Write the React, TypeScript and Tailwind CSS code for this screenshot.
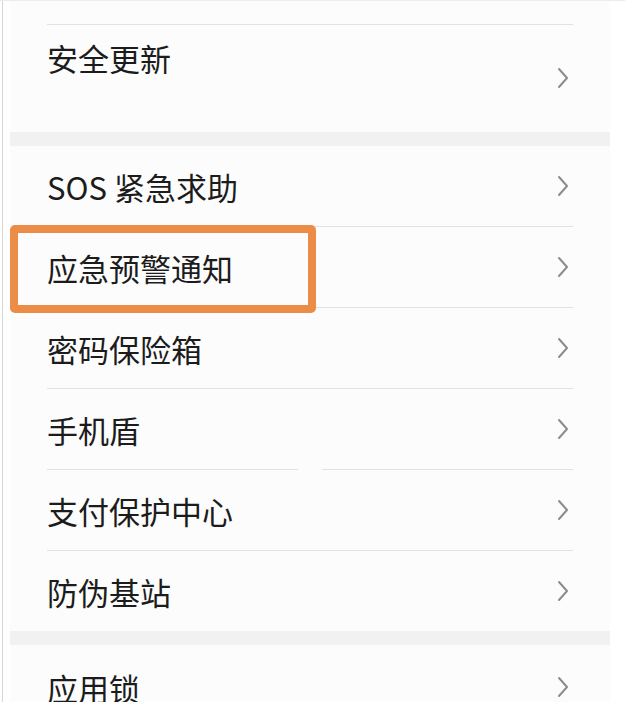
const cjk = { fontFamily: '"Noto Sans CJK SC", "Noto Sans", sans-serif' };

function Chevron() {
  return (
    <svg width="12" height="22" viewBox="0 0 12 22" className="shrink-0">
      <polyline
        points="2,2 10,11 2,20"
        fill="none"
        stroke="#8c8c8c"
        strokeWidth="2"
        strokeLinecap="round"
        strokeLinejoin="round"
      />
    </svg>
  );
}

function Row({
  label,
  divider = true,
  split = false,
  highlight = false,
}: {
  label: string;
  divider?: boolean;
  split?: boolean;
  highlight?: boolean;
}) {
  return (
    <div className="relative px-[37px]">
      <div className="flex h-[80px] items-center justify-between">
        <span className="text-[31px] leading-none text-[#1c1c1c]">{label}</span>
        <div className="mr-[4px]">
          <Chevron />
        </div>
      </div>
      {divider &&
        (split ? (
          <div className="flex h-px gap-[24px]">
            <div className="w-[251px] bg-[#e2e2e2]" />
            <div className="flex-1 bg-[#e2e2e2]" />
          </div>
        ) : (
          <div className="h-px bg-[#e2e2e2]" />
        ))}
      {highlight && (
        <div className="absolute left-0 top-[-2px] h-[88px] w-[306px] rounded-[5px] border-[8px] border-[#ec8d47]" />
      )}
    </div>
  );
}

export default function App() {
  return (
    <div
      className="h-[702px] overflow-hidden border-t border-[#ececec] bg-white"
      style={cjk}
    >
      <div className="flex h-full">
        <div className="ml-[2px] w-px bg-[#d6d6d6]" />
        <div className="ml-[7px] w-[600px] bg-[#fcfcfc]">
          <div className="h-[23px]" />
          <div className="px-[37px]">
            <div className="h-px bg-[#e2e2e2]" />
            <div className="flex h-[107px] justify-between">
              <span className="pt-[17px] text-[31px] leading-none text-[#1c1c1c]">安全更新</span>
              <div className="mr-[4px] pt-[42px]">
                <Chevron />
              </div>
            </div>
          </div>
          <div className="h-[14px] bg-[#f1f1f1]" />
          <Row label="SOS 紧急求助" />
          <Row label="应急预警通知" highlight />
          <Row label="密码保险箱" />
          <Row label="手机盾" split />
          <Row label="支付保护中心" />
          <Row label="防伪基站" divider={false} />
          <div className="h-[14px] bg-[#f1f1f1]" />
          <div className="px-[37px]">
            <div className="flex h-[80px] items-center justify-between pt-[4px]">
              <span className="text-[31px] leading-none text-[#1c1c1c]">应用锁</span>
              <div className="mr-[4px]">
                <Chevron />
              </div>
            </div>
          </div>
        </div>
      </div>
    </div>
  );
}
